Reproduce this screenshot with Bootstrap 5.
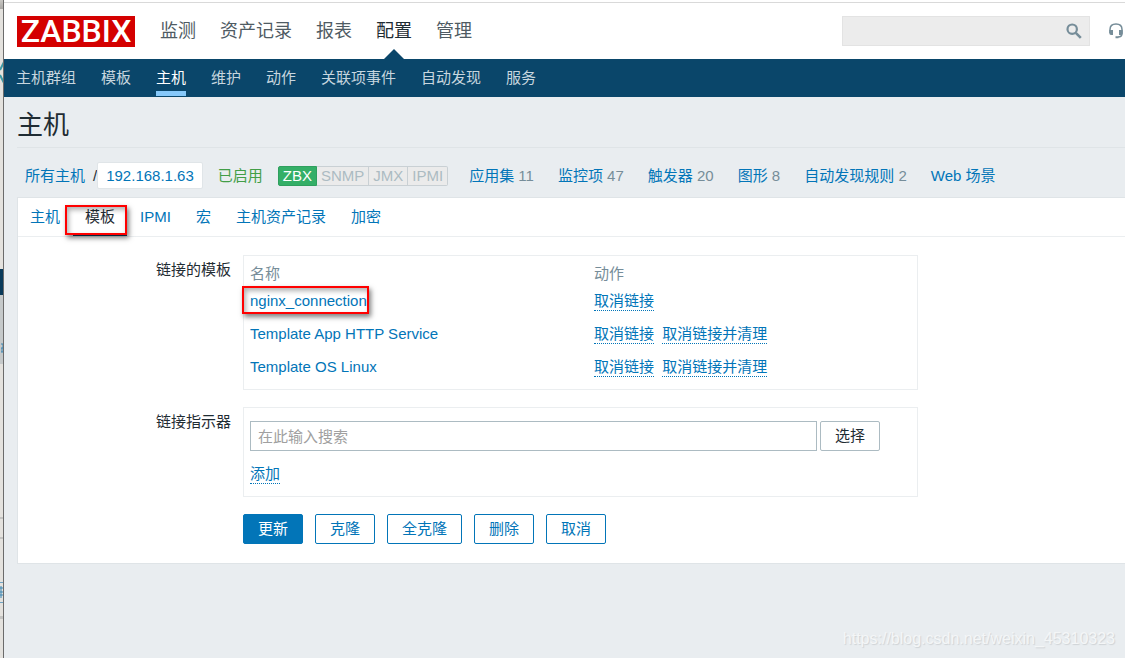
<!DOCTYPE html>
<html lang="zh-CN">
<head>
<meta charset="utf-8">
<meta name="viewport" content="width=device-width, initial-scale=1">
<title>主机 - Zabbix</title>
<link rel="stylesheet" href="https://cdn.jsdelivr.net/npm/bootstrap@5.3.0/dist/css/bootstrap.min.css">
<style>
  body { font: 15px/20px "Liberation Sans", "Noto Sans CJK SC", sans-serif; color: #1f2c33; background: #e9edf0; }
  a { color: #0275b8; text-decoration: none; }
  a:hover { color: #01579b; }
  ul { list-style: none; margin: 0; padding: 0; }

  /* sliver of the window behind */
  .behind { width: 4px; border-right: 1px solid #6b6b6b;
    background:
      linear-gradient(#c9c7c3, #a9a7a4) 0 0 / 4px 9px no-repeat,
      linear-gradient(#093a5a, #093a5a) 0 269px / 4px 26px no-repeat,
      linear-gradient(#c5c9ca, #c5c9ca) 0 295px / 4px 69px no-repeat,
      linear-gradient(#c4c4c2, #c4c4c2) 0 517px / 4px 2px no-repeat,
      linear-gradient(#c4c4c2, #c4c4c2) 0 537px / 4px 2px no-repeat,
      linear-gradient(#6fa3c4, #6fa3c4) 0 582px / 4px 1px no-repeat,
      linear-gradient(#6fa3c4, #6fa3c4) 0 602px / 4px 1px no-repeat,
      linear-gradient(#c4c4c2, #c4c4c2) 0 616px / 4px 3px no-repeat,
      #e4e2de; }

  .topbar { background: #fff; border-top: 1px solid #d9d9d9; margin-top: 2px; height: 57px; padding: 0 2px 0 13px; }
  .window-edge { background: #fff; }
  .logo { background: #d40000; color: #fff; font-family: Roboto, sans-serif; font-weight: 500; font-size: 32px; line-height: 31px; width: 118px; text-align: center; }
  .logo:hover { color: #fff; }
  .mainmenu { gap: 24px; font-size: 18px; line-height: 56px; margin-left: 25px; }
  .mainmenu a { color: #4f5b63; display: block; position: relative; }
  .mainmenu a.active { color: #1f2c33; }
  .mainmenu a.active::after { content: ""; position: absolute; left: 50%; bottom: 0; margin-left: -10px;
    border: 10px solid transparent; border-top: 0; border-bottom-color: #0a466a; }
  .search { width: 248px; height: 30px; background: #ececec; border: 1px solid #e3e3e3; margin-right: 19px; }
  .search input { border: 0; background: none; min-width: 0; outline: 0; }
  .search button, .iconlink { border: 0; background: none; padding: 0; line-height: 0; }
  .search button { margin-right: 7px; }

  .submenu { background: #0a466a; height: 38px; padding-left: 12px; gap: 25px; }
  .submenu a { display: block; color: #c7d6df; line-height: 38px; height: 37px; }
  .submenu a.active { color: #fff; border-bottom: 5px solid #86c8f9; }

  .content { padding-left: 13px; }
  h1 { font-size: 26px; line-height: 56px; height: 51px; font-weight: 400; margin: 0; border-bottom: 1px solid #dfe4e7; }
  .crumbs { height: 49px; padding: 6px 0 0 8px; }
  .hostlink { background: #fff; border: 1px solid #e0e5e8; border-radius: 2px; line-height: 25px; padding: 0 8px; }
  .enabled { color: #429e47; margin: 0 15px; }
  .avail span { border: 1px solid #c9d0d4; border-left-width: 0; background: #ebebeb; color: #acbbc2; line-height: 18px; height: 20px; padding: 0 4px; }
  .avail .on { background: #34af67; border-color: #2f9f5e; color: #fff; border-radius: 2px 0 0 2px; border-left-width: 1px; }
  .avail :last-child { border-radius: 0 2px 2px 0; }
  .counts { gap: 24px; margin-left: 21px; }
  .counts, .colhead { color: #768d99; }

  .panelbox { background: #fff; border: 1px solid #dfe4e7; border-right: 0; }
  .tabbar { height: 39px; gap: 1px; border-bottom: 1px solid #ebeef0; }
  .tabbar a { display: block; padding: 0 12px; line-height: 37px; height: 38px; position: relative; }
  .tabbar a.active { color: #1f2c33; border-bottom: 2px solid #0a466a; }
  .marked { position: relative; }
  .marked::before { content: ""; position: absolute; inset: -6px -2px -5px -8px; border: 2px solid #f00; box-shadow: 2px 3px 5px rgba(0,0,0,.5), inset 2px 3px 5px rgba(0,0,0,.3); pointer-events: none; }
  .tabbar .marked::before { inset: 7px 0 -1px -8px; }

  .formgrid { display: grid; grid-template-columns: 213px minmax(0, 675px); column-gap: 12px; row-gap: 17px; padding: 18px 0 19px; }
  .formgrid .lbl { text-align: right; padding-top: 5px; }
  .fieldbox { border: 1px solid #ebeef0; padding: 7px 6px 5px; }
  .fieldbox table { width: 100%; table-layout: fixed; }
  .fieldbox th { font-weight: 400; padding: 1px 0; height: 22px; }
  .fieldbox td { padding: 6px 0 7px; height: 33px; }
  .fieldbox th:first-child { width: 344px; }
  .act { border: 0; border-bottom: 1px dotted #0275b8; background: none; color: #0275b8; padding: 0; line-height: 19px; display: inline-block; vertical-align: top; }
  .act + .act { margin-left: 4px; }
  .linker { padding: 13px 37px 12px 6px; }
  .linker input { border: 1px solid #acbbc2; height: 30px; padding: 0 7px; min-width: 0; }
  .linker input::placeholder { color: #a0a0a0; opacity: 1; }
  .linker .act { margin-top: 13px; }
  .linker .zbtn { margin-left: 3px; }
  .zbtn { --bs-btn-font-size: 15px; --bs-btn-line-height: 20px; --bs-btn-padding-x: 14px; --bs-btn-padding-y: 4px; --bs-btn-border-radius: 2px;
    --bs-btn-color: #0275b8; --bs-btn-border-color: #0275b8; --bs-btn-bg: #fff; --bs-btn-hover-color: #01579b; --bs-btn-hover-border-color: #01579b; }
  .zbtn.main { --bs-btn-color: #fff; --bs-btn-bg: #0275b8; --bs-btn-hover-color: #fff; --bs-btn-hover-bg: #02659f; }
  .zbtn.plain { --bs-btn-color: #1f2c33; --bs-btn-border-color: #acbbc2; }
  .buttons { grid-column: 2; gap: 12px; }
  .credit { position: absolute; right: 10px; bottom: 8px; font-size: 16px; line-height: 22px; color: #f4f6f7; text-shadow: 1px 1px 1px #ced2d5; }
</style>
</head>
<body>
<div class="d-flex min-vh-100 position-relative">
  <div class="behind flex-shrink-0 position-relative" aria-hidden="true">
    <svg class="position-absolute top-0 start-0" width="3" height="610" fill="none">
      <path d="M4 62 0 70M0 75l4 8" stroke="#3b9aa6" stroke-width="2"/>
      <path d="M1 344h2v4H1M2 348v4M1 352h2M0 588h3M1 586v12M0 592h3M0 595h3" stroke="#3d87b3"/>
    </svg>
  </div>
  <div class="flex-grow-1" style="min-width:0">
    <div class="window-edge overflow-hidden">
      <header class="topbar d-flex align-items-center">
        <a class="logo" href="#">ZABBIX</a>
        <nav><ul class="mainmenu d-flex">
          <li><a href="#">监测</a></li><li><a href="#">资产记录</a></li><li><a href="#">报表</a></li>
          <li><a class="active" href="#">配置</a></li><li><a href="#">管理</a></li>
        </ul></nav>
        <form class="search d-flex align-items-center ms-auto">
          <input class="flex-grow-1" type="text" aria-label="搜索">
          <button type="button" aria-label="搜索">
            <svg width="16" height="16" viewBox="0 0 16 16" fill="none" stroke="#768d99"><circle cx="6.2" cy="6.2" r="4.7" stroke-width="2.2"/><path d="m9.8 9.8 5 5" stroke-width="2.6"/></svg>
          </button>
        </form>
        <a class="iconlink" href="#" aria-label="支持">
          <svg width="14" height="16" viewBox="0 0 14 16"><path d="M1 10V6.5C1 3 3.5 1 7 1s6 2 6 5.5v4c0 2-1.5 3.5-4 3.5" fill="none" stroke="#768d99" stroke-width="1.5"/><path d="M.3 7H4v5H2C1 12 .3 11.3.3 10zM10 7h3.700v3c0 1.300-.7 2-1.700 2h-2zM6.500 13.200h3v2h-3z" fill="#768d99"/></svg>
        </a>
      </header>
    </div>
    <nav><ul class="submenu d-flex">
      <li><a href="#">主机群组</a></li><li><a href="#">模板</a></li><li><a class="active" href="#">主机</a></li><li><a href="#">维护</a></li>
      <li><a href="#">动作</a></li><li><a href="#">关联项事件</a></li><li><a href="#">自动发现</a></li><li><a href="#">服务</a></li>
    </ul></nav>

    <main class="content">
      <h1>主机</h1>
      <div class="crumbs d-flex align-items-center text-nowrap">
        <a href="#">所有主机</a><span class="ps-2">/</span>
        <a class="hostlink" href="#">192.168.1.63</a>
        <span class="enabled">已启用</span>
        <div class="avail d-flex"><span class="on">ZBX</span><span>SNMP</span><span>JMX</span><span>IPMI</span></div>
        <ul class="counts d-flex">
          <li><a href="#">应用集</a> 11</li><li><a href="#">监控项</a> 47</li><li><a href="#">触发器</a> 20</li>
          <li><a href="#">图形</a> 8</li><li><a href="#">自动发现规则</a> 2</li><li><a href="#">Web 场景</a></li>
        </ul>
      </div>

      <section class="panelbox">
        <ul class="tabbar d-flex">
          <li><a href="#">主机</a></li><li><a class="active marked" href="#">模板</a></li><li><a href="#">IPMI</a></li>
          <li><a href="#">宏</a></li><li><a href="#">主机资产记录</a></li><li><a href="#">加密</a></li>
        </ul>
        <form class="formgrid">
          <div class="lbl" id="linked">链接的模板</div>
          <div class="fieldbox">
            <table aria-labelledby="linked">
              <thead><tr class="colhead"><th>名称</th><th>动作</th></tr></thead>
              <tbody>
                <tr><td><a class="marked" href="#">nginx_connection</a></td><td><button type="button" class="act">取消链接</button></td></tr>
                <tr><td><a href="#">Template App HTTP Service</a></td><td><button type="button" class="act">取消链接</button> <button type="button" class="act">取消链接并清理</button></td></tr>
                <tr><td><a href="#">Template OS Linux</a></td><td><button type="button" class="act">取消链接</button> <button type="button" class="act">取消链接并清理</button></td></tr>
              </tbody>
            </table>
          </div>
          <label class="lbl" for="tpl">链接指示器</label>
          <div class="fieldbox linker">
            <div class="d-flex">
              <input class="flex-grow-1" id="tpl" type="text" placeholder="在此输入搜索">
              <button type="button" class="btn zbtn plain flex-shrink-0">选择</button>
            </div>
            <button type="button" class="act">添加</button>
          </div>
          <div class="buttons d-flex">
            <button type="button" class="btn zbtn main">更新</button>
            <button type="button" class="btn zbtn">克隆</button>
            <button type="button" class="btn zbtn">全克隆</button>
            <button type="button" class="btn zbtn">删除</button>
            <button type="button" class="btn zbtn">取消</button>
          </div>
        </form>
      </section>
    </main>
  </div>
  <div class="credit">https://blog.csdn.net/weixin_45310323</div>
</div>
<script src="https://cdn.jsdelivr.net/npm/bootstrap@5.3.0/dist/js/bootstrap.bundle.min.js"></script>
</body>
</html>
